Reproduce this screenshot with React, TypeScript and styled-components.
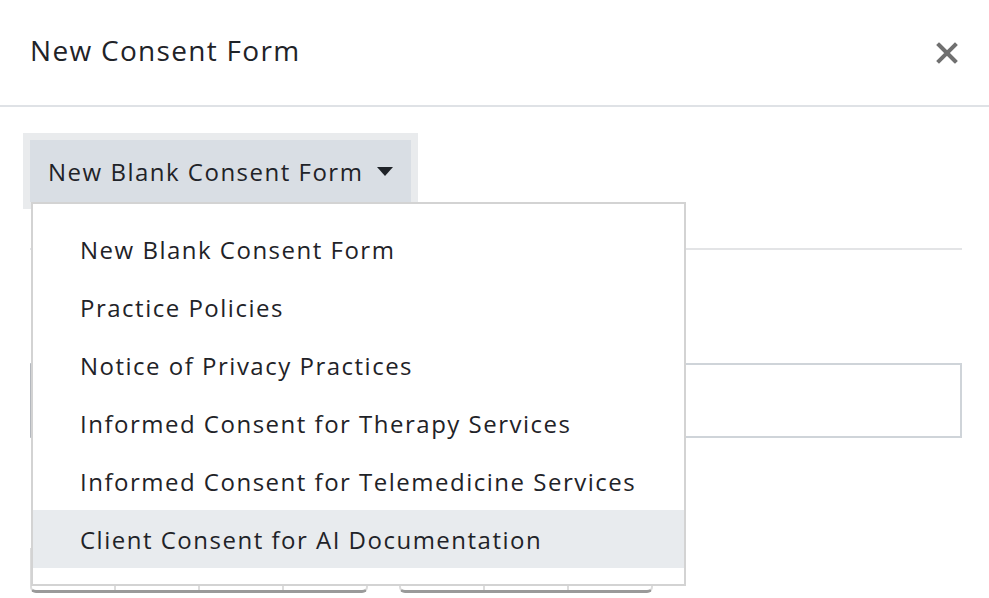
import React from 'react';
import styled, { createGlobalStyle } from 'styled-components';

const GlobalStyle = createGlobalStyle`
  body {
    margin: 0;
    background: #ffffff;
    font-family: 'Open Sans', 'Noto Sans', sans-serif;
    color: #1f2328;
    overflow: hidden;
  }
`;

const Modal = styled.div`
  width: 989px;
  height: 598px;
  overflow: hidden;
`;

const Header = styled.div`
  display: flex;
  align-items: center;
  justify-content: space-between;
  height: 105px;
  padding: 0 30px 0 30px;
  border-bottom: 2px solid #dfe2e6;
`;

const Title = styled.h1`
  margin: 0 0 6px;
  font-size: 28px;
  font-weight: 400;
  letter-spacing: 1.3px;
`;

const CloseButton = styled.button`
  border: 0;
  background: none;
  padding: 0;
  width: 24px;
  height: 24px;
  display: flex;
  align-items: center;
  justify-content: center;
  cursor: pointer;
`;

const Body = styled.div`
  padding: 33px 27px 0 30px;
`;

const Dropdown = styled.div`
  position: relative;
  display: inline-block;
`;

const Toggle = styled.button`
  display: flex;
  align-items: center;
  gap: 14px;
  height: 62px;
  padding: 0 18px;
  border: 0;
  background: #d9dee4;
  box-shadow: 0 0 0 7px #e9ebed;
  font-family: inherit;
  font-size: 24px;
  letter-spacing: 1.5px;
  color: #1f2328;
`;

const Caret = styled.span`
  width: 0;
  height: 0;
  border-left: 8px solid transparent;
  border-right: 8px solid transparent;
  border-top: 9px solid #1f2328;
`;

const Menu = styled.ul`
  position: absolute;
  top: 100%;
  left: 1px;
  width: 651px;
  margin: 0;
  padding: 16px 0;
  list-style: none;
  background: #ffffff;
  border: 2px solid #d3d3d3;
  z-index: 10;
`;

const MenuItem = styled.li<{ $active?: boolean }>`
  height: 58px;
  display: flex;
  align-items: center;
  padding-left: 47px;
  font-size: 24px;
  letter-spacing: 1.5px;
  background: ${ ({ $active }) => ($active ? '#e8ebee' : 'transparent') };
`;

const Tabs = styled.div`
  height: 46px;
  border-bottom: 2px solid #e3e4e6;
`;

const Spacer = styled.div<{ $h: number }>`
  height: ${ ({ $h }) => $h }px;
`;

const Input = styled.div`
  height: 71px;
  border: 2px solid #cfd4d9;
  border-left-color: #b3b7bd;
`;

const Toolbar = styled.div`
  display: flex;
  gap: 31px;
`;

const ButtonGroup = styled.div`
  display: flex;
  border: 2px solid #dcdcdc;
  border-bottom: 3px solid #9a9a9a;
  border-radius: 0 0 6px 6px;
`;

const ToolButton = styled.div`
  width: 82px;
  height: 40px;
  & + & {
    border-left: 2px solid #dcdcdc;
  }
`;

const items = [
  'New Blank Consent Form',
  'Practice Policies',
  'Notice of Privacy Practices',
  'Informed Consent for Therapy Services',
  'Informed Consent for Telemedicine Services',
  'Client Consent for AI Documentation',
];

const App = () => (
  <Modal>
    <GlobalStyle />
    <Header>
      <Title>New Consent Form</Title>
      <CloseButton aria-label='Close'>
        <svg width='22' height='22' viewBox='0 0 22 22'>
          <path d='M3 3 L19 19 M19 3 L3 19' stroke='#707070' strokeWidth='4' strokeLinecap='square' />
        </svg>
      </CloseButton>
    </Header>
    <Body>
      <Dropdown>
        <Toggle>
          New Blank Consent Form
          <Caret />
        </Toggle>
        <Menu>
          {items.map((item, i) => (
            <MenuItem key={item} $active={i === items.length - 1}>{item}</MenuItem>
          ))}
        </Menu>
      </Dropdown>
      <Tabs />
      <Spacer $h={113} />
      <Input />
      <Spacer $h={110} />
      <Toolbar>
        <ButtonGroup>
          <ToolButton /><ToolButton /><ToolButton /><ToolButton />
        </ButtonGroup>
        <ButtonGroup>
          <ToolButton /><ToolButton /><ToolButton />
        </ButtonGroup>
      </Toolbar>
    </Body>
  </Modal>
);

export default App;
